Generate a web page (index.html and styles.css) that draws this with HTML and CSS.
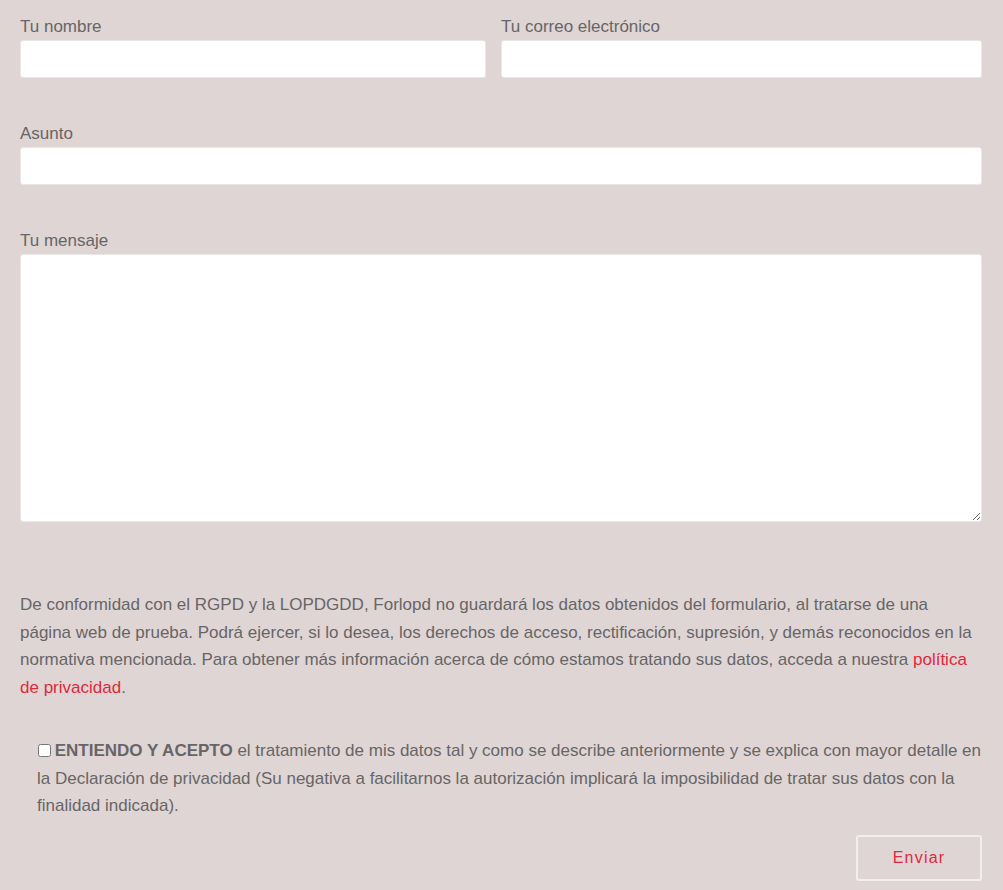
FILE: index.html
```html
<!DOCTYPE html>
<html lang="es">
<head>
    <meta charset="UTF-8">
    <meta name="viewport" content="width=device-width, initial-scale=1.0">
    <title>Contacto</title>
    <link rel="stylesheet" href="styles.css">
</head>
<body>
    <form class="contact-form">
        <!-- Name and email -->
        <div class="row two-cols">
            <label class="field">
                <span class="field-label">Tu nombre</span>
                <input type="text" name="nombre">
            </label>
            <label class="field">
                <span class="field-label">Tu correo electrónico</span>
                <input type="email" name="correo">
            </label>
        </div>

        <div class="row">
            <label class="field">
                <span class="field-label">Asunto</span>
                <input type="text" name="asunto">
            </label>
        </div>

        <div class="row message-row">
            <label class="field">
                <span class="field-label">Tu mensaje</span>
                <textarea name="mensaje"></textarea>
            </label>
        </div>

        <!-- Legal text -->
        <p class="legal">De conformidad con el RGPD y la LOPDGDD, Forlopd no guardará los datos obtenidos del formulario, al tratarse de una página web de prueba. Podrá ejercer, si lo desea, los derechos de acceso, rectificación, supresión, y demás reconocidos en la normativa mencionada. Para obtener más información acerca de cómo estamos tratando sus datos, acceda a nuestra <a href="#">política de privacidad</a>.</p>

        <p class="accept">
            <input type="checkbox" name="acepto"> <strong>ENTIENDO Y ACEPTO</strong> el tratamiento de mis datos tal y como se describe anteriormente y se explica con mayor detalle en la Declaración de privacidad (Su negativa a facilitarnos la autorización implicará la imposibilidad de tratar sus datos con la finalidad indicada).
        </p>

        <div class="actions">
            <button type="submit" class="send-btn">Enviar</button>
        </div>
    </form>
</body>
</html>
```

FILE: styles.css
```css
/* Basic page styling */
body {
    margin: 0;
    padding: 0;
    background-color: #e0d5d5;
    font-family: "Liberation Sans", Arial, sans-serif;
    font-size: 17px;
    color: #666;
}

.contact-form {
    padding: 15px 21px 0 20px;
}

/* Field rows */
.row {
    margin-bottom: 44px;
}

.message-row {
    margin-bottom: 69px;
}

.two-cols {
    display: grid;
    grid-template-columns: 466px 1fr;
    column-gap: 15px;
}

.field {
    display: block;
}

.field-label {
    display: block;
    line-height: 24px;
    margin-bottom: 1px;
}

.field input,
.field textarea {
    display: block;
    width: 100%;
    box-sizing: border-box;
    height: 38px;
    margin: 0;
    padding: 6px 10px;
    border: 1px solid #ebe7e7;
    border-radius: 3px;
    background-color: white;
    font-family: inherit;
    font-size: 16px;
    color: #666;
}

.field textarea {
    height: 268px;
    resize: vertical;
}

/* Legal text */
.legal {
    margin: 0 0 35px 0;
    line-height: 27.7px;
}

.legal a {
    color: #e3283b;
    text-decoration: none;
}

.accept {
    margin: 0 -4px 0 0;
    padding-left: 17px;
    line-height: 27.7px;
}

.accept input {
    margin: 0 -1px 0 1px;
    width: 13px;
    height: 13px;
    vertical-align: -1px;
}

/* Submit button */
.actions {
    display: flex;
    justify-content: flex-end;
    margin-top: 15px;
}

.send-btn {
    width: 126px;
    height: 46px;
    background: transparent;
    border: 2px solid #f3eeee;
    border-radius: 3px;
    color: #e3283b;
    font-family: inherit;
    font-size: 16px;
    letter-spacing: 1.2px;
    cursor: pointer;
}
```
